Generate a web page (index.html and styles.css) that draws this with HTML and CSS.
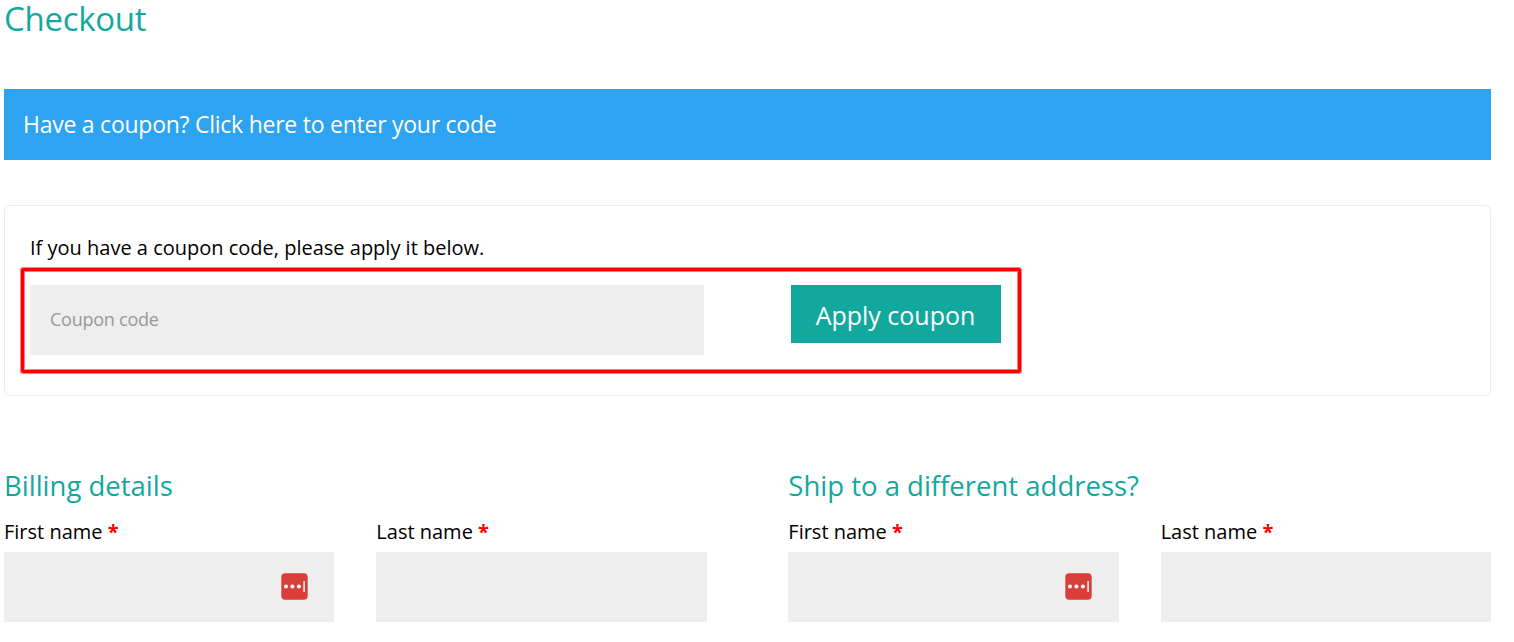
FILE: index.html
```html
<!DOCTYPE html>
<html lang="en">
<head>
<meta charset="UTF-8" />
<title>Checkout</title>
<link rel="stylesheet" href="styles.css">
</head>
<body>
<h1 class="page-title">Checkout</h1>
<div class="coupon-notice">Have a coupon? <a href="#coupon">Click here to enter your code</a></div>

<form class="coupon-form" id="coupon">
  <p class="coupon-text">If you have a coupon code, please apply it below.</p>
  <div class="coupon-row">
    <input type="text" class="coupon-input" placeholder="Coupon code">
    <button type="button" class="coupon-button">Apply coupon</button>
  </div>
</form>

<form class="details">
  <div class="details-col">
    <h3 class="details-title">Billing details</h3>
    <div class="fields">
      <div class="field">
        <label for="billing_first">First name <span class="required">*</span></label>
        <div class="input-wrap">
          <input type="text" id="billing_first">
          <svg class="autofill" viewBox="0 0 27 27"><rect x=".3" y=".3" width="26.4" height="26.4" rx="4" fill="#d83f3a"/><g fill="#fff"><circle cx="5" cy="13.5" r="2"/><circle cx="11.4" cy="13.5" r="2"/><circle cx="17.9" cy="13.5" r="2"/><rect x="22.4" y="8" width="1.4" height="11"/></g></svg>
        </div>
      </div>
      <div class="field">
        <label for="billing_last">Last name <span class="required">*</span></label>
        <div class="input-wrap"><input type="text" id="billing_last"></div>
      </div>
    </div>
  </div>
  <div class="details-col">
    <h3 class="details-title">Ship to a different address?</h3>
    <div class="fields">
      <div class="field">
        <label for="shipping_first">First name <span class="required">*</span></label>
        <div class="input-wrap">
          <input type="text" id="shipping_first">
          <svg class="autofill" viewBox="0 0 27 27"><rect x=".3" y=".3" width="26.4" height="26.4" rx="4" fill="#d83f3a"/><g fill="#fff"><circle cx="5" cy="13.5" r="2"/><circle cx="11.4" cy="13.5" r="2"/><circle cx="17.9" cy="13.5" r="2"/><rect x="22.4" y="8" width="1.4" height="11"/></g></svg>
        </div>
      </div>
      <div class="field">
        <label for="shipping_last">Last name <span class="required">*</span></label>
        <div class="input-wrap"><input type="text" id="shipping_last"></div>
      </div>
    </div>
  </div>
</form>
</body>
</html>
```
FILE: styles.css
```css
* {
  box-sizing: border-box;
}
body {
  margin: 0;
  padding: 0 23px 0 4px;
  background-color: #fff;
  color: #000;
  font-family: "Open Sans", sans-serif;
  font-size: 20px;
}
.page-title {
  margin: 0 0 51px;
  height: 38px;
  line-height: 38px;
  font-size: 33px;
  font-weight: 400;
  letter-spacing: -0.3px;
  color: #13a89e;
}
.coupon-notice {
  height: 71px;
  padding: 0 19px;
  line-height: 71px;
  font-size: 23px;
  letter-spacing: -0.25px;
  background-color: #2ea3f2;
  color: #fff;
}
.coupon-notice a {
  color: #fff;
  text-decoration: none;
}
.coupon-form {
  height: 191px;
  margin-top: 45px;
  padding: 27px 16px 0;
  border: 1px solid #ececec;
  border-radius: 6px;
}
.coupon-text {
  margin: 0 0 5px 9px;
  line-height: 30px;
}
/* red frame around the code field and its button */
.coupon-row {
  display: flex;
  align-items: flex-start;
  gap: 87px;
  width: 1000px;
  height: 105px;
  padding: 14px 6px;
  border: 3px solid #fe0000;
  border-radius: 2px;
  box-shadow: 0 0 0 1px #ff8080, inset 0 0 0 1px #ff8080;
}
.coupon-input {
  width: 674px;
  height: 70px;
  padding: 0 20px 2px;
  border: 0;
  background-color: #eee;
  font-family: inherit;
  font-size: 18px;
  letter-spacing: -0.25px;
}
.coupon-input::placeholder {
  color: #999;
}
.coupon-button {
  width: 210px;
  height: 58px;
  padding: 1px 1px 0 0;
  border: 0;
  background-color: #13a89e;
  color: #fff;
  font-family: inherit;
  font-size: 25px;
}
.details {
  display: grid;
  grid-template-columns: 702.66px 702.66px;
  gap: 81.67px;
  margin-top: 70px;
}
.details-title {
  margin: 0 0 6px;
  line-height: 40px;
  font-size: 27.5px;
  font-weight: 400;
  color: #13a89e;
}
.fields {
  display: grid;
  grid-template-columns: 1fr 1fr;
  gap: 42px;
}
.field label {
  display: block;
  height: 40px;
  line-height: 40px;
}
.required {
  color: #f00;
  font-weight: 700;
}
.input-wrap {
  position: relative;
}
.input-wrap input {
  display: block;
  width: 100%;
  height: 70px;
  border: 0;
  background-color: #eee;
}
.autofill {
  position: absolute;
  top: 21.4px;
  right: 26.7px;
  width: 27px;
  height: 27px;
}
```
